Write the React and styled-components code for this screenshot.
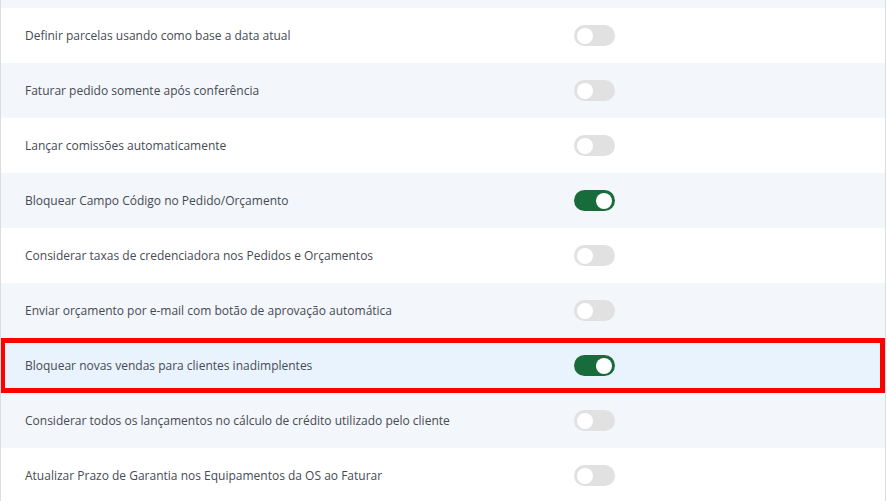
import React from 'react';
import styled, { createGlobalStyle } from 'styled-components';

const GlobalStyle = createGlobalStyle`
    body {
        margin: 0;
        background: #ffffff;
        font-family: "Open Sans", "Liberation Sans", sans-serif;
    }
`

const Panel = styled.div`
    width: 884px;
    height: 501px;
    overflow: hidden;
    border-left: 1px solid #d9dde4;
    border-right: 1px solid #d9dde4;
    display: flex;
    flex-direction: column;
`

const TopEdge = styled.div`
    height: 8px;
    flex-shrink: 0;
    background: #f3f6fa;
`

const Row = styled.div`
    height: 55px;
    flex-shrink: 0;
    display: grid;
    grid-template-columns: 549px 41px 1fr;
    align-items: center;
    background: ${p => p.$marked ? '#e9f3fd' : p.$odd ? '#f3f6fa' : '#ffffff'};
    box-shadow: ${p => p.$marked ? 'inset 0 0 0 5px #ff0000' : 'none'};
    margin-left: ${p => p.$marked ? '-1px' : '0'};
    padding-left: ${p => p.$marked ? '25px' : '24px'};
`

const Label = styled.span`
    font-size: 12px;
    color: #454b54;
    white-space: nowrap;
    margin-top: -1px;
`

const Switch = styled.span`
    grid-column: 2;
    width: 41px;
    height: 21px;
    border-radius: 11px;
    background: ${p => p.$on ? '#186c3c' : '#e1e1e1'};
    display: flex;
    align-items: center;
    justify-content: ${p => p.$on ? 'flex-end' : 'flex-start'};
    padding: 0 3px;
    box-sizing: border-box;
`

const Knob = styled.span`
    width: 16px;
    height: 16px;
    border-radius: 50%;
    background: #ffffff;
`

const options = [
    { text: 'Definir parcelas usando como base a data atual', on: false },
    { text: 'Faturar pedido somente após conferência', on: false },
    { text: 'Lançar comissões automaticamente', on: false },
    { text: 'Bloquear Campo Código no Pedido/Orçamento', on: true },
    { text: 'Considerar taxas de credenciadora nos Pedidos e Orçamentos', on: false },
    { text: 'Enviar orçamento por e-mail com botão de aprovação automática', on: false },
    { text: 'Bloquear novas vendas para clientes inadimplentes', on: true, marked: true },
    { text: 'Considerar todos os lançamentos no cálculo de crédito utilizado pelo cliente', on: false },
    { text: 'Atualizar Prazo de Garantia nos Equipamentos da OS ao Faturar', on: false },
]

const App = () => {
    return (
        <>
            <GlobalStyle />
            <Panel>
                <TopEdge />
                {options.map((o, i) => (
                    <Row key={o.text} $odd={i % 2 === 1} $marked={o.marked}>
                        <Label>{o.text}</Label>
                        <Switch $on={o.on}><Knob /></Switch>
                    </Row>
                ))}
            </Panel>
        </>
    )
}

export default App
